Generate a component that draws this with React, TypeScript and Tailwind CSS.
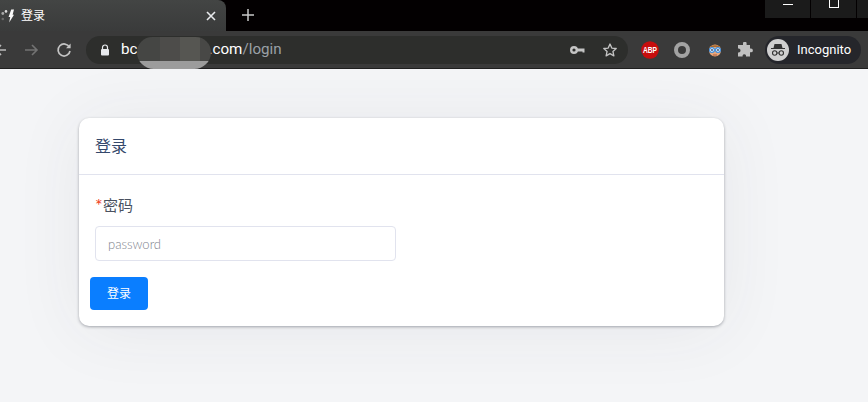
import React from "react";

const cjk = '"Lato","Noto Sans CJK SC",sans-serif';

function Favicon() {
  return (
    <svg width="14" height="16" viewBox="0 0 14 16" className="ml-[-1px] shrink-0">
      <circle cx="1.8" cy="5.5" r="1.4" fill="#a8a8a8" />
      <circle cx="5" cy="3.4" r="1.3" fill="#dcdcdc" />
      <path d="M10.2 1.5 L13 1.5 L11.6 6.8 L13 6.8 L8.2 14.5 L9.2 9 L7.6 9 Z" fill="#fafafa" />
      <circle cx="1.8" cy="11" r="1.3" fill="#6a6a6a" />
    </svg>
  );
}

export default function App() {
  return (
    <div className="h-[402px] w-[868px] overflow-hidden flex flex-col bg-[#f4f5f7]" style={{ fontFamily: cjk }}>
      {/* tab strip */}
      <div className="h-[31px] shrink-0 bg-[#030001] flex items-start relative">
        <div className="h-[31px] w-[226px] bg-gradient-to-b from-[#434544] to-[#3a3b3b] rounded-tr-lg flex items-center pl-[2px] pr-[10px] relative">
          <Favicon />
          <span className="ml-[6px] text-[12px] text-white">登录</span>
          <svg width="10" height="10" viewBox="0 0 10 10" className="ml-auto" stroke="#e8eaed" strokeWidth="1.6">
            <path d="M1 1 L9 9 M9 1 L1 9" />
          </svg>
        </div>
        <svg width="14" height="14" viewBox="0 0 14 14" className="ml-[15px] mt-[8px]" stroke="#c8c8c8" strokeWidth="1.5">
          <path d="M7 1 V13 M1 7 H13" />
        </svg>
        <div className="ml-auto flex h-[18px] gap-[1px]">
          <div className="w-[45px] bg-[#1b1b1b] flex justify-center">
            <div className="w-[10px] h-[1px] bg-white mt-[4px]" />
          </div>
          <div className="w-[45px] bg-[#1b1b1b] flex justify-center">
            <div className="w-[10px] h-[8px] border border-white border-t-0" />
          </div>
          <div className="w-[11px] bg-[#1b1b1b]" />
        </div>
      </div>

      {/* toolbar */}
      <div className="h-[38px] shrink-0 bg-[#3a3a3a] border-b border-[#1f1f1f] flex items-center relative">
        <svg width="12" height="14" viewBox="0 0 12 14" className="ml-[-5px] shrink-0" stroke="#b9b9b9" strokeWidth="1.6" fill="none">
          <path d="M11 7 H1 M6 2 L1 7 L6 12" />
        </svg>
        <svg width="15" height="14" viewBox="0 0 15 14" className="ml-[17px] shrink-0" stroke="#737373" strokeWidth="1.6" fill="none">
          <path d="M1 7 H13 M8 2 L13 7 L8 12" />
        </svg>
        <svg width="16" height="16" viewBox="0 0 16 16" className="ml-[17px] shrink-0" stroke="#c4c4c4" strokeWidth="1.7" fill="none">
          <path d="M13.4 5.2 A6 6 0 1 0 14 9" />
          <path d="M14.6 1.6 V6.2 H10" fill="#c4c4c4" stroke="none" />
        </svg>
        {/* omnibox */}
        <div className="ml-[14px] w-[542px] h-[28px] mt-[1px] rounded-full bg-[#2d2e2c] flex items-center pl-[14px] pr-[10px] shrink-0">
          <svg width="10" height="12" viewBox="0 0 10 12" className="shrink-0">
            <path d="M2.5 5 V3.5 A2.5 2.5 0 0 1 7.5 3.5 V5" stroke="#e8eaed" strokeWidth="1.2" fill="none" />
            <rect x="1" y="5" width="8" height="6.5" rx="1" fill="#e8eaed" />
          </svg>
          <span className="ml-[11px] text-[15.2px] leading-none text-white whitespace-nowrap" style={{ fontFamily: "Roboto,sans-serif" }}>
            bc
          </span>
          <div className="w-[71px] shrink-0" />
          <span className="text-[15.2px] leading-none whitespace-nowrap" style={{ fontFamily: "Roboto,sans-serif" }}>
            <span className="text-white">.com</span>
            <span className="text-[#9aa0a6]">/login</span>
          </span>
          <svg width="15" height="10" viewBox="0 0 15 10" className="ml-auto shrink-0">
            <circle cx="4" cy="5" r="2.8" stroke="#c4c4c4" strokeWidth="2.4" fill="none" />
            <path d="M7 3.6 H14.5 V7.6 H12.5 V6.4 H7 Z" fill="#c4c4c4" />
          </svg>
          <svg width="16" height="16" viewBox="0 0 24 24" className="ml-[17px] shrink-0" stroke="#c4c4c4" strokeWidth="2" fill="none" strokeLinejoin="round">
            <path d="M12 3 L14.7 9.1 L21.3 9.8 L16.4 14.2 L17.8 20.7 L12 17.4 L6.2 20.7 L7.6 14.2 L2.7 9.8 L9.3 9.1 Z" />
          </svg>
        </div>
        {/* extensions */}
        <svg width="18" height="18" viewBox="0 0 18 18" className="ml-[13px] shrink-0">
          <circle cx="9" cy="9" r="8.8" fill="#c70d0d" />
          <text x="9" y="12.2" textAnchor="middle" fontSize="8.5" fontWeight="700" fill="#fff" fontFamily="Liberation Sans" textLength="14" lengthAdjust="spacingAndGlyphs">ABP</text>
        </svg>
        <div className="ml-[15px] w-4 h-4 rounded-full border-[4px] border-[#a3a3a3] shrink-0" />
        <svg width="16" height="16" viewBox="0 0 16 16" className="ml-[17px] shrink-0">
          <circle cx="8" cy="8.5" r="6" fill="#e8a77a" />
          <path d="M2 7 C2 2 14 2 14 7 L13 5 H3 Z" fill="#a8692f" />
          <circle cx="5" cy="8" r="2.4" fill="#fff" stroke="#3d8fe0" strokeWidth="1.2" />
          <circle cx="11" cy="8" r="2.4" fill="#fff" stroke="#3d8fe0" strokeWidth="1.2" />
          <circle cx="5" cy="8" r="0.9" fill="#27406b" />
          <circle cx="11" cy="8" r="0.9" fill="#27406b" />
          <path d="M6 13 H10" stroke="#b05a3a" strokeWidth="1" />
        </svg>
        <svg width="16" height="16" viewBox="0 0 16 16" className="ml-[14px] shrink-0">
          <path d="M6 1.5 A1.8 1.8 0 0 1 9.6 1.5 V3 H13 V6.5 H14 A1.9 1.9 0 0 1 14 10.3 H13 V14.5 H9 V13.4 A1.8 1.8 0 0 0 5.6 13.4 V14.5 H1 V10.5 H2 A2 2 0 0 0 2 6.6 H1 V3 H6 Z" fill="#c0c0c0" />
        </svg>
        <div className="ml-[12px] h-[28px] w-[96px] rounded-full bg-[#25262b] flex items-center pl-[2px] shrink-0">
          <div className="w-[22px] h-[22px] rounded-full bg-[#d0d0d0] flex items-center justify-center shrink-0">
            <svg width="16" height="14" viewBox="0 0 16 14">
              <path d="M4.5 1 H11.5 L12.5 5 H15 V6 H1 V5 H3.5 Z" fill="#333" />
              <circle cx="4.7" cy="10" r="2.2" stroke="#333" strokeWidth="1.1" fill="none" />
              <circle cx="11.3" cy="10" r="2.2" stroke="#333" strokeWidth="1.1" fill="none" />
              <path d="M6.9 10 H9.1" stroke="#333" strokeWidth="1" />
            </svg>
          </div>
          <span className="ml-[8px] text-[13px] text-white" style={{ fontFamily: "Roboto,sans-serif" }}>
            Incognito
          </span>
        </div>

        {/* redacted area, laid over the address */}
        <div className="absolute left-[137px] top-[6px] w-[74px] h-[32px] rounded-b-[22px] rounded-t-[20px] overflow-hidden flex flex-col">
          <div className="h-[24px] flex">
            <div className="w-[23px] bg-[#454644]" />
            <div className="w-[20px] bg-[#4d4c4a]" />
            <div className="w-[20px] bg-[#565652]" />
            <div className="w-[11px] bg-[#484846]" />
          </div>
          <div className="flex-1 bg-[#9c9c9c]" />
        </div>
      </div>

      {/* page */}
      <div className="flex-1 pt-[49px] pl-[79px]">
        <div className="w-[645px] h-[208px] bg-white rounded-[10px] shadow-[0_1px_3px_rgba(50,54,70,0.4),0_4px_70px_rgba(50,54,70,0.07)]">
          <div className="h-[57px] border-b border-[#e1e3ee] pl-4 flex items-center">
            <span className="text-[16px] text-[#34486b]">登录</span>
          </div>
          <div className="pl-4 pt-[18px]">
            <div className="text-[15px] leading-[24px] text-[#4a5160] flex">
              <span className="text-[#f03a17] text-[18px] w-[8px] leading-[24px]">*</span>
              <span>密码</span>
            </div>
            <input
              placeholder="password"
              className="mt-[9px] block w-[301px] h-[35px] rounded-[4px] border border-[#e1e3ee] px-3 text-[13px] font-light bg-white outline-none placeholder:text-[#7d828b]"
              style={{ fontFamily: cjk }}
              readOnly
            />
            <div className="ml-[-5px] mt-[16px] w-[58px] h-[33px] rounded-[4px] bg-[#0a7eff] text-white text-[12px] flex items-center justify-center">
              登录
            </div>
          </div>
        </div>
      </div>
    </div>
  );
}
